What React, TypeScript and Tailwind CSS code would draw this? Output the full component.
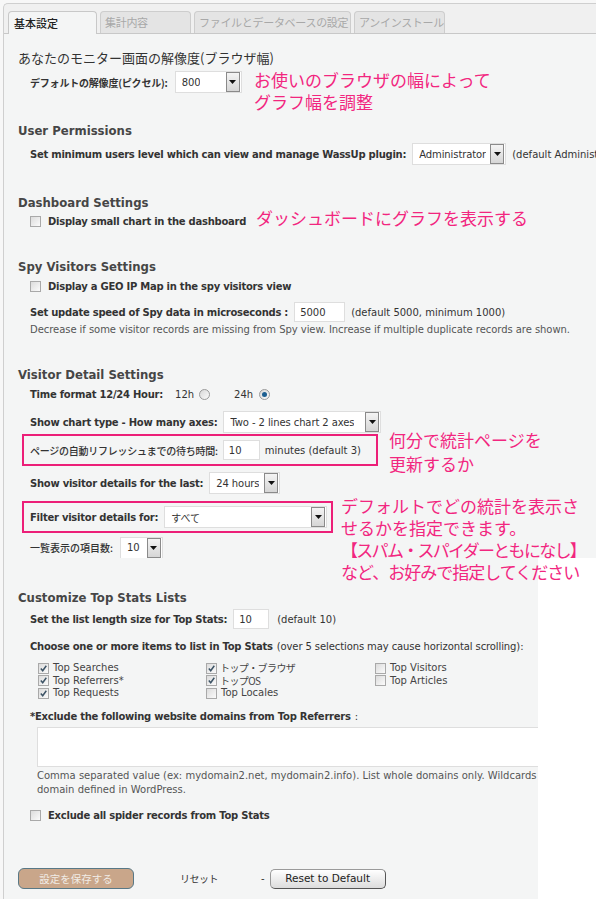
import * as React from "react"

const jp = "font-['Noto_Sans_CJK_JP',sans-serif]"
const en = "font-['DejaVu_Sans','Noto_Sans_CJK_JP',sans-serif]"

const Arrow = () => (
  <span className="flex h-[20px] w-[14px] shrink-0 items-center justify-center border border-[#8a8a8a] bg-gradient-to-b from-[#f4f4f4] to-[#d6d6d6]">
    <svg viewBox="0 0 7 4" className="h-[4px] w-[7px]">
      <path d="M0 0H7L3.5 4Z" fill="#111" />
    </svg>
  </span>
)

function Select({ value, width, className }: { value: string; width: number; className?: string }) {
  return (
    <div
      className={`flex h-[22px] shrink-0 items-center justify-between border border-[#dedede] bg-white pl-[6px] pr-[1px] text-[10px] tracking-[-0.1px] text-[#333] ${className ?? ""}`}
      style={{ width }}
    >
      <span className="overflow-hidden whitespace-nowrap">{value}</span>
      <Arrow />
    </div>
  )
}

function Input({ value, width }: { value: string; width: number }) {
  return (
    <div
      className="flex h-[20px] shrink-0 items-center border border-[#dedede] bg-white px-[5px] text-[10px] text-[#333]"
      style={{ width }}
    >
      {value}
    </div>
  )
}

function Check({ checked = false }: { checked?: boolean }) {
  return (
    <span className="flex h-[11px] w-[11px] shrink-0 items-center justify-center border border-[#a9a9a9] bg-gradient-to-br from-[#dcdcdc] to-[#fbfbfb]">
      {checked ? (
        <svg viewBox="0 0 9 9" className="h-[9px] w-[9px]">
          <path d="M1.8 4.6L3.7 6.7L7.3 1.8" stroke="#3d5466" strokeWidth="1.5" fill="none" />
        </svg>
      ) : null}
    </span>
  )
}

function Radio({ on = false }: { on?: boolean }) {
  return (
    <span className="flex h-[11px] w-[11px] items-center justify-center rounded-full border border-[#9a9a9a] bg-gradient-to-br from-[#d8d8d8] to-[#fbfbfb]">
      {on ? <span className="h-[5px] w-[5px] rounded-full bg-[#1d5f91]" /> : null}
    </span>
  )
}

const tabs = [
  { label: "集計内容", w: 91 },
  { label: "ファイルとデータベースの設定", w: 157 },
  { label: "アンインストール", w: 91 },
]

const h2 = "flex h-[18px] items-center text-[11.7px] font-bold text-[#464646] whitespace-nowrap"
const label = "font-bold tracking-[-0.25px] text-[#333]"
const pink = `absolute ${jp} text-[17px] leading-[22px] text-[#f2267f] whitespace-nowrap`

const stats: [string, boolean][] = [
  ["Top Searches", true],
  ["トップ・ブラウザ", true],
  ["Top Visitors", false],
  ["Top Referrers*", true],
  ["トップOS", true],
  ["Top Articles", false],
  ["Top Requests", true],
  ["Top Locales", false],
]

export default function App() {
  return (
    <div className={`relative h-[899px] w-[596px] overflow-hidden bg-[#f7f7f7] ${en} text-[10px] text-[#333]`}>
      <div className="ml-[3px] mt-[3px] h-[896px] rounded-tl-[5px] border-l border-t border-[#cfcfcf] bg-[#f0f0f0]">
        <div className="flex items-end gap-[3px] border-b border-[#c8c8c8] pl-[4px] pt-[7px]">
          <div className={`-mb-px flex h-[23px] w-[89px] items-center whitespace-nowrap rounded-t-[4px] border border-b-0 border-[#c8c8c8] bg-[#f4f5f5] pl-[5px] ${jp} text-[11px] font-medium text-[#222]`}>
            基本設定
          </div>
          {tabs.map((t) => (
            <div
              key={t.label}
              className={`flex h-[22px] shrink-0 items-center overflow-hidden whitespace-nowrap rounded-t-[4px] border border-b-0 border-[#cdcdcd] bg-[#e4e4e4] pl-[4px] ${jp} text-[11px] tracking-[-0.3px] text-[#a8a8a8]`}
              style={{ width: t.w }}
            >
              {t.label}
            </div>
          ))}
        </div>

        <div className="bg-[#f4f5f5] pl-[14px]">
          <div className={`flex h-[34px] items-end pt-[14px] ${jp} text-[13px] text-[#333]`}>
            <span className="leading-[20px]">あなたのモニター画面の解像度(ブラウザ幅)</span>
          </div>
          <div className="ml-[12px] mt-[3px] flex h-[22px] items-center gap-[7px]">
            <span className={`${jp} text-[10px] font-bold tracking-[-0.2px]`}>デフォルトの解像度(ピクセル):</span>
            <Select value="800" width={67} />
          </div>

          <div className={`${h2} mt-[30px]`}>User Permissions</div>
          <div className="ml-[12px] mt-[2px] flex h-[22px] items-center gap-[6px] whitespace-nowrap">
            <span className={label}>Set minimum users level which can view and manage WassUp plugin:</span>
            <Select value="Administrator" width={94} />
            <span>(default Administrator)</span>
          </div>

          <div className={`${h2} mt-[30px]`}>Dashboard Settings</div>
          <div className="ml-[12px] flex h-[16px] items-center gap-[7px]">
            <Check />
            <span className={label}>Display small chart in the dashboard</span>
          </div>

          <div className={`${h2} mt-[30px]`}>Spy Visitors Settings</div>
          <div className="ml-[12px] mt-[1px] flex h-[16px] items-center gap-[7px]">
            <Check />
            <span className={label}>Display a GEO IP Map in the spy visitors view</span>
          </div>
          <div className="ml-[12px] mt-[7px] flex h-[22px] items-center gap-[6px] whitespace-nowrap">
            <span className={label}>Set update speed of Spy data in microseconds :</span>
            <Input value="5000" width={51} />
            <span>(default 5000, minimum 1000)</span>
          </div>
          <div className="ml-[12px] flex h-[13px] items-center whitespace-nowrap tracking-[-0.05px] text-[#555]">
            Decrease if some visitor records are missing from Spy view. Increase if multiple duplicate records are shown.
          </div>

          <div className={`${h2} mt-[31px]`}>Visitor Detail Settings</div>
          <div className="ml-[12px] mt-[1px] flex h-[16px] items-center whitespace-nowrap">
            <span className={label}>Time format 12/24 Hour:</span>
            <span className="ml-[12px]">12h</span>
            <span className="ml-[5px]"><Radio /></span>
            <span className="ml-[24px]">24h</span>
            <span className="ml-[6px]"><Radio on /></span>
          </div>
          <div className="ml-[12px] mt-[9px] flex h-[22px] items-center gap-[6px] whitespace-nowrap">
            <span className={label}>Show chart type - How many axes:</span>
            <Select value="Two - 2 lines chart 2 axes" width={158} />
          </div>

          <div className="ml-[4px] mt-[1px] flex h-[32px] w-[356px] items-center gap-[5px] whitespace-nowrap border-2 border-[#ec1f78] pl-[6px]">
            <span className={`${jp} text-[10px] font-medium tracking-[-0.25px]`}>ページの自動リフレッシュまでの待ち時間:</span>
            <Input value="10" width={37} />
            <span>minutes (default 3)</span>
          </div>

          <div className="ml-[12px] mt-[6px] flex h-[22px] items-center gap-[6px] whitespace-nowrap">
            <span className={label}>Show visitor details for the last:</span>
            <Select value="24 hours" width={71} />
          </div>

          <div className="ml-[4px] mt-[7px] flex h-[32px] w-[311px] items-center gap-[6px] whitespace-nowrap border-2 border-[#ec1f78] pl-[6px]">
            <span className={label}>Filter visitor details for:</span>
            <Select value="すべて" width={163} className={jp} />
          </div>

          <div className="ml-[12px] mt-[4px] flex h-[21px] items-center gap-[7px]">
            <span className={`${jp} text-[10px] font-medium`}>一覧表示の項目数:</span>
            <Select value="10" width={43} />
          </div>
        </div>

        <div className="flex">
          <div className="w-[534px] shrink-0 overflow-hidden bg-[#f4f5f5] pb-[40px] pl-[14px]">
            <div className={`${h2} mt-[32px]`}>Customize Top Stats Lists</div>
            <div className="ml-[12px] mt-[1px] flex h-[20px] items-center gap-[6px] whitespace-nowrap">
              <span className={label}>Set the list length size for Top Stats:</span>
              <Input value="10" width={36} />
              <span className="ml-[2px]">(default 10)</span>
            </div>
            <div className="ml-[12px] mt-[10px] flex h-[14px] items-center whitespace-nowrap">
              <span className={label}>Choose one or more items to list in Top Stats</span>
              <span className="ml-[4px] tracking-[-0.1px]">(over 5 selections may cause horizontal scrolling):</span>
            </div>
            <div className="ml-[20px] mt-[9px] grid w-[480px] grid-cols-[168px_169px_1fr] leading-none">
              {stats.map(([t, c]) => (
                <div key={t} className="flex h-[12.6px] items-center gap-[3px] whitespace-nowrap text-[#444]">
                  <Check checked={c} />
                  <span className={/[ぁ-ヴ]/.test(t) ? `${jp} text-[10px] leading-none tracking-[-0.6px]` : "ml-[1px]"}>
                    {t}
                  </span>
                </div>
              ))}
            </div>
            <div className="ml-[12px] mt-[10px] flex h-[14px] items-center whitespace-nowrap">
              <span className={label}>*Exclude the following website domains from Top Referrers</span>
              <span className="ml-[4px]">:</span>
            </div>
            <div className="ml-[19px] mt-[3px] h-[40px] w-[520px] border border-[#dedede] bg-white" />
            <div className="ml-[19px] mt-[2px] whitespace-nowrap leading-[14px] text-[#555]">
              <div>Comma separated value (ex: mydomain2.net, mydomain2.info). List whole domains only. Wildcards and partial domains are ignored.</div>
              <div>domain defined in WordPress.</div>
            </div>
            <div className="ml-[12px] mt-[11px] flex h-[16px] items-center gap-[7px]">
              <Check />
              <span className={label}>Exclude all spider records from Top Stats</span>
            </div>

            <div className="mt-[45px] flex h-[20px] items-center">
              <div className={`flex h-[21px] w-[116px] items-center justify-center rounded-[6px] border border-[#587886] bg-[#c9a68a] ${jp} text-[10.5px] text-[#f1ece6]`}>
                設定を保存する
              </div>
              <span className={`ml-[46px] ${jp} text-[10px] tracking-[-0.5px]`}>リセット</span>
              <span className="ml-[43px]">-</span>
              <div className="ml-[5px] flex h-[20px] w-[116px] items-center justify-center rounded-[5px] border border-[#9a9a9a] border-b-[#555] border-r-[#555] bg-gradient-to-b from-white to-[#dcdcdc] text-[10.5px] text-[#222]">
                Reset to Default
              </div>
            </div>
          </div>
          <div className="flex-1 bg-white" />
        </div>
      </div>

      <div className={`${pink} left-[254px] top-[69px]`}>
        お使いのブラウザの幅によって
        <br />
        グラフ幅を調整
      </div>
      <div className={`${pink} left-[256px] top-[207px]`}>ダッシュボードにグラフを表示する</div>
      <div className={`${pink} left-[389px] top-[428px] leading-[24px]`}>
        何分で統計ページを
        <br />
        更新するか
      </div>
      <div className={`${pink} left-[341px] top-[495px]`}>
        <div>デフォルトでどの統計を表示さ</div>
        <div>せるかを指定できます。</div>
        <div className="tracking-[-1.7px]">【スパム・スパイダーともになし】</div>
        <div className="tracking-[-1px]">など、お好みで指定してください</div>
      </div>
    </div>
  )
}
